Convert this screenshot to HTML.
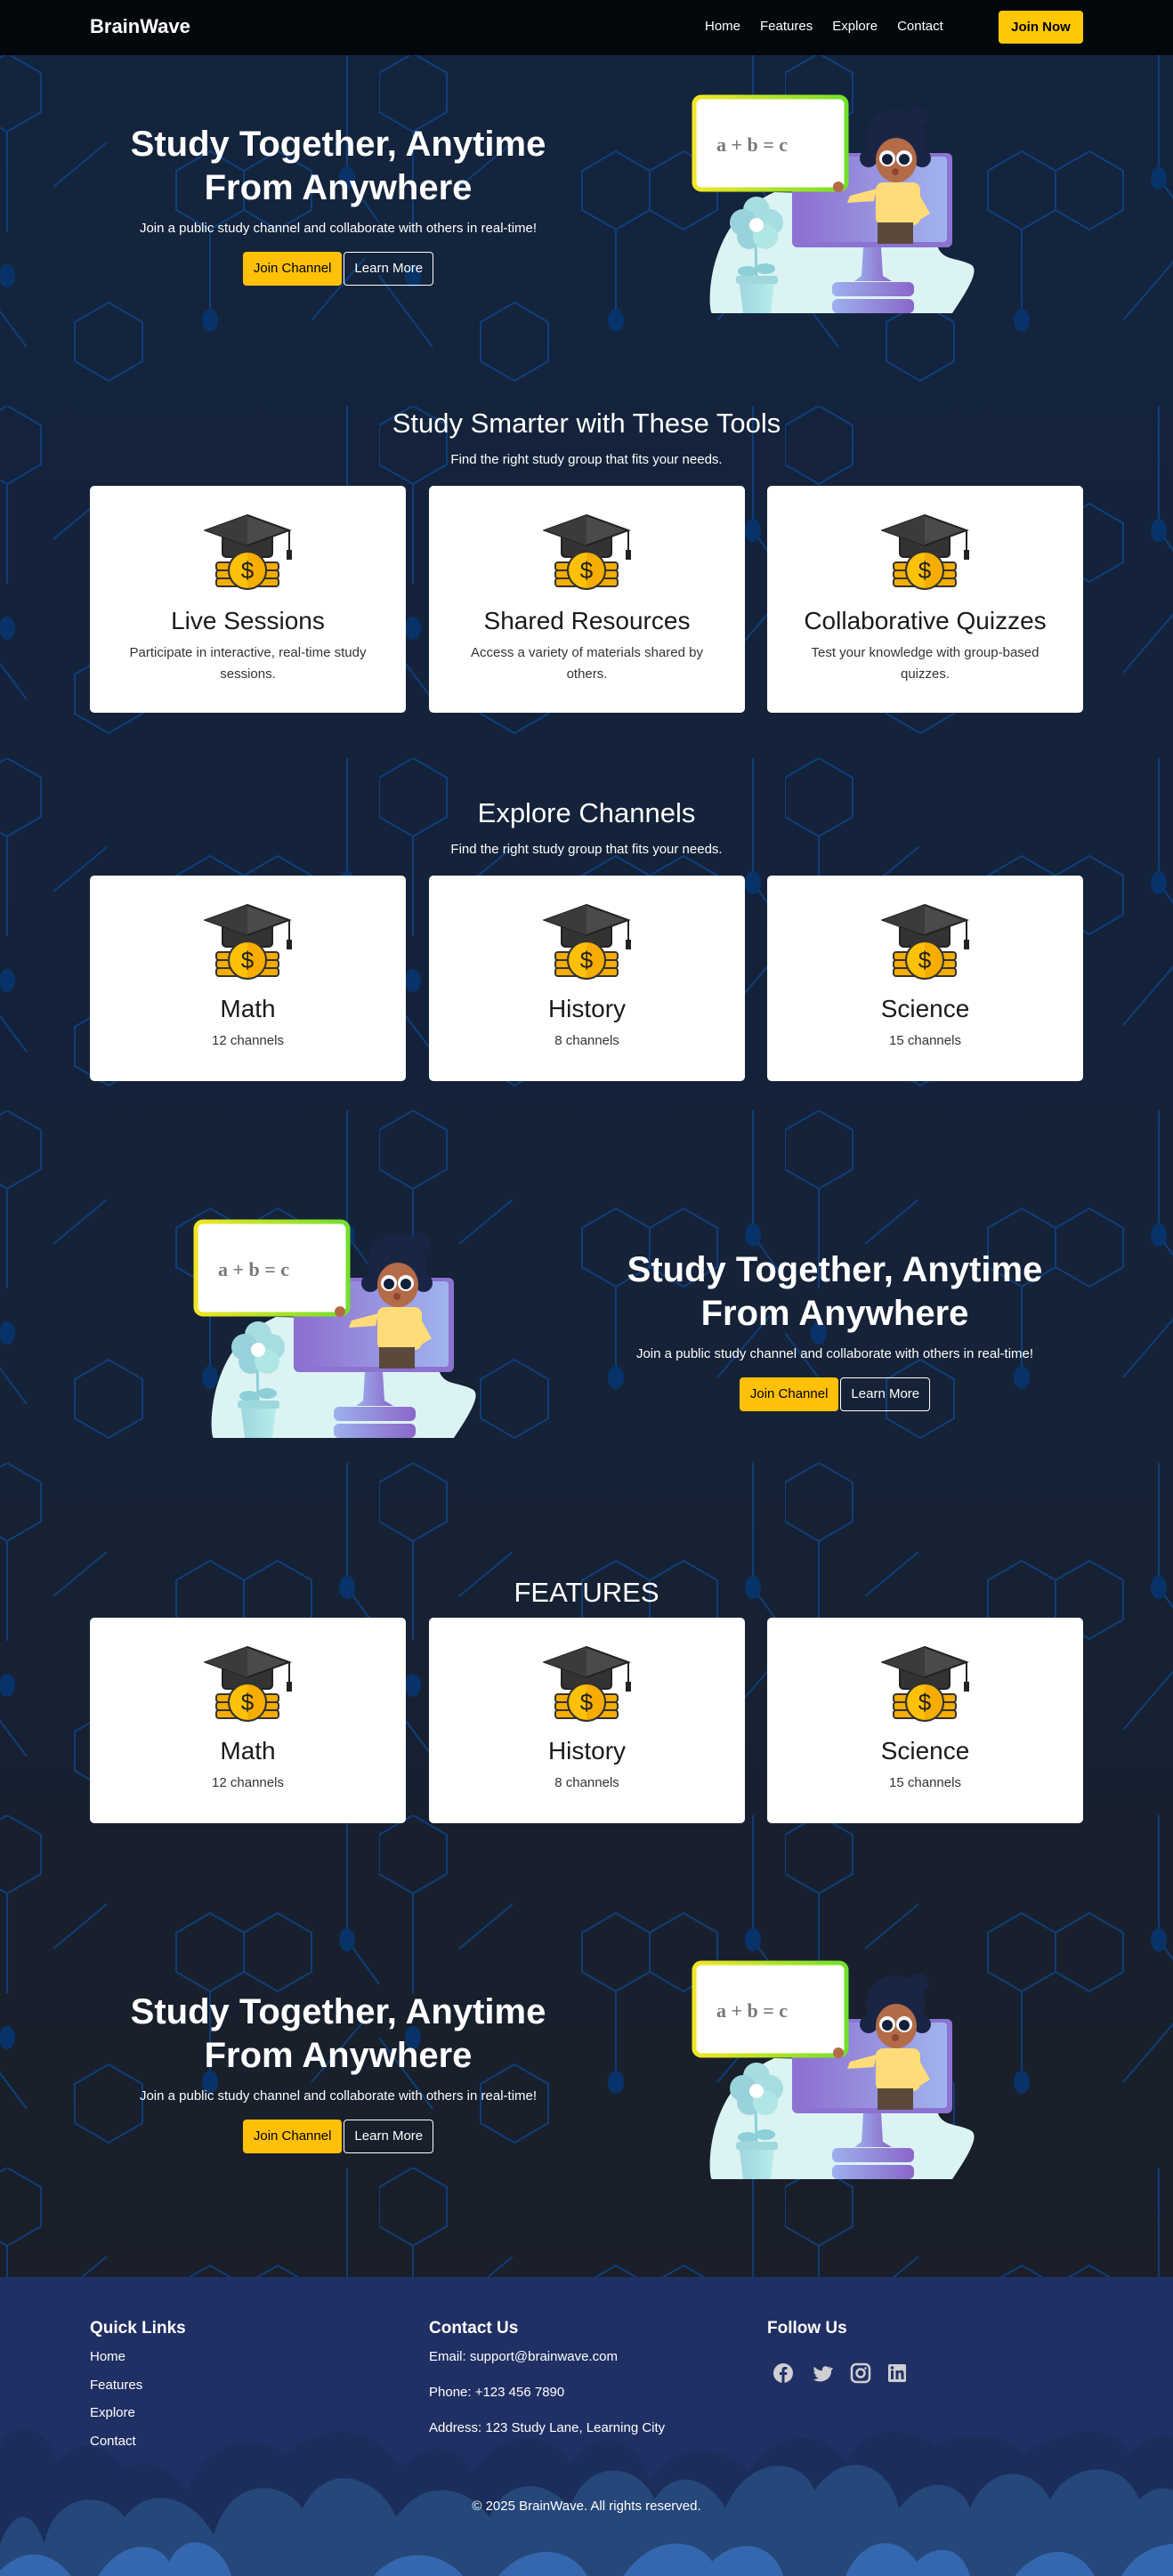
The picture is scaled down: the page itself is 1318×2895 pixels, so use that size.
<!DOCTYPE html>
<html><head><meta charset="utf-8">
<style>
*{box-sizing:border-box;margin:0;padding:0}
body{width:1318px;height:2895px;overflow:hidden;font-family:"Liberation Sans",sans-serif;color:#fff;position:relative;background:linear-gradient(#13243d 0%,#152238 50%,#1b1e24 100%)}
#bg{position:absolute;left:0;top:0;width:1318px;height:2560px}
nav{position:absolute;left:0;top:0;width:1318px;height:62px;background:#03080d;z-index:2}
.logo{position:absolute;left:101px;top:17px;font-size:22px;font-weight:bold}
.links{position:absolute;left:792px;top:21px;font-size:15px}
.links span{margin-right:22px}
.jn{position:absolute;left:1122px;top:12px;width:95px;height:37px;background:#ffc807;color:#000;border-radius:4px;font-size:15px;font-weight:bold;text-align:center;line-height:37px}
.abs{position:absolute}
.hero{position:absolute;width:560px;text-align:center}
.hero h1{font-size:40px;line-height:49px;font-weight:bold}
.hero p{font-size:15px;margin-top:12px}
.btns{margin-top:18px}
.b{display:inline-block;height:38px;line-height:36px;padding:0 11px;font-size:15px;border-radius:4px;vertical-align:top}
.y{background:#ffc107;color:#000;border:1px solid #ffc107}
.o{border:1px solid #fff;color:#fff;margin-left:2px}
.sec{position:absolute;left:0;width:1318px;text-align:center}
.sec h2{font-size:31px;font-weight:normal}
.sec p{font-size:15px;margin-top:14px}
.card{position:absolute;width:355px;background:#fff;border-radius:5px;text-align:center;color:#222}
.card svg{display:block;margin:0 auto}
.card h3{font-size:28px;font-weight:normal;margin-top:16px;color:#1a1a1a}
.card .d{font-size:15px;line-height:24px;color:#333;margin:8px 30px 0}
footer{position:absolute;left:0;top:2559px;width:1318px;height:336px;background:#203064;overflow:hidden}
footer h4{position:absolute;font-size:19px;font-weight:bold;top:47px}
footer .l{position:absolute;font-size:15px}
</style></head><body>
<svg id="bg" viewBox="0 0 1318 2560">
<defs>
<pattern id="hx" width="456" height="396" patternUnits="userSpaceOnUse" x="-30" y="60">
<g fill="none" stroke="#0b4a98" stroke-width="2" opacity=".7">
<path d="M38 0 L76 22 L76 66 L38 88 L0 66 L0 22 Z"/>
<path d="M266 110 L304 132 L304 176 L266 198 L228 176 L228 132 Z"/>
<path d="M342 110 L380 132 L380 176 L342 198 L304 176 L304 132 Z"/>
<path d="M152 280 L190 302 L190 346 L152 368 L114 346 L114 302 Z"/>
<path d="M38 88 L38 200 M266 198 L266 300 M420 0 L420 140 L456 190"/>
<path d="M0 250 L60 330 M380 300 L440 230 M90 150 L150 100"/>
</g>
<g fill="#08336a">
<ellipse cx="38" cy="250" rx="9" ry="13"/>
<ellipse cx="266" cy="300" rx="9" ry="13"/>
<ellipse cx="420" cy="140" rx="9" ry="13"/>
</g>
</pattern>
</defs>
<rect width="1318" height="2560" fill="url(#hx)"/>
</svg>

<svg width="0" height="0" style="position:absolute">
<defs>
<linearGradient id="bd" x1="0" x2="1"><stop offset="0" stop-color="#f2e624"/><stop offset="1" stop-color="#72e02a"/></linearGradient>
<linearGradient id="mon" x1="0" x2="1"><stop offset="0" stop-color="#8e6fd0"/><stop offset="1" stop-color="#a0b4ee"/></linearGradient>
<linearGradient id="st" x1="0" x2="1"><stop offset="0" stop-color="#9db0ee"/><stop offset="1" stop-color="#8a67c9"/></linearGradient>
<linearGradient id="pt" x1="0" x2="1"><stop offset="0" stop-color="#9fd6de"/><stop offset="1" stop-color="#b6ecea"/></linearGradient>
<symbol id="ill" viewBox="0 0 340 260">
<path d="M100 116 C70 130 45 150 32 200 C25 230 28 252 30 252 L300 252 C318 225 330 205 322 198 C305 188 285 195 282 170 L282 120 Z" fill="#dcf3f3"/>
<rect x="120" y="72" width="180" height="106" rx="6" fill="#8c72d1"/>
<rect x="126" y="76" width="168" height="96" rx="4" fill="url(#mon)"/>
<path d="M200 178 L220 178 L222 210 L232 216 L190 216 L198 210 Z" fill="url(#st)"/>
<rect x="165" y="217" width="92" height="16" rx="6" fill="url(#st)"/>
<rect x="165" y="236" width="92" height="16" rx="6" fill="url(#st)"/>
<circle cx="236" cy="56" r="33" fill="#1a2545"/>
<circle cx="206" cy="78" r="10" fill="#1a2545"/><circle cx="266" cy="78" r="10" fill="#1a2545"/>
<circle cx="262" cy="32" r="11" fill="#1a2545"/>
<rect x="214" y="105" width="50" height="48" rx="8" fill="#ffdc78"/>
<path d="M215 112 L185 120 L182 128 L212 126 Z" fill="#ffdc78"/>
<path d="M258 110 L275 140 L262 148 L250 120 Z" fill="#ffdc78"/>
<rect x="216" y="150" width="40" height="24" fill="#5b4a3b"/>
<ellipse cx="237" cy="80" rx="23" ry="25" fill="#b36b48"/>
<circle cx="227" cy="78" r="9" fill="#fff"/><circle cx="246" cy="78" r="9" fill="#fff"/>
<circle cx="227" cy="79" r="6" fill="#13203a"/><circle cx="246" cy="79" r="6" fill="#13203a"/>
<circle cx="236" cy="93" r="4" fill="#8c4730"/>
<rect x="10" y="9" width="171" height="104" rx="8" fill="#fff" stroke="url(#bd)" stroke-width="5"/>
<text x="35" y="70" font-family="Liberation Serif,serif" font-weight="bold" font-size="22" fill="#7a7a7a">a + b = c</text>
<circle cx="172" cy="110" r="6" fill="#b36b48"/>
<path d="M79 168 L80 215" stroke="#8ccfd7" stroke-width="3"/>
<ellipse cx="70" cy="205" rx="11" ry="6" fill="#8ccfd7"/><ellipse cx="90" cy="202" rx="11" ry="6" fill="#8ccfd7"/>
<circle cx="80" cy="136" r="15" fill="#a5dde0"/><circle cx="65" cy="150" r="15" fill="#9ad2db"/><circle cx="95" cy="150" r="15" fill="#a5dde0"/><circle cx="72" cy="166" r="14" fill="#9ad2db"/><circle cx="90" cy="166" r="14" fill="#b0e6e4"/>
<circle cx="80" cy="153" r="8" fill="#fff"/>
<rect x="57" y="210" width="47" height="9" rx="3" fill="#9fd8dc"/>
<path d="M61 219 L100 219 L96 252 L65 252 Z" fill="url(#pt)"/>
</symbol>
<symbol id="cap" viewBox="0 0 100 88">
<rect x="21" y="18" width="56" height="30" rx="4" fill="#333" stroke="#222" stroke-width="2"/>
<path d="M49 1 L96 18 L49 35 L2 18 Z" fill="#4a4a4a" stroke="#222" stroke-width="2"/>
<path d="M49 1 L49 35 L2 18 Z" fill="#3b3b3b"/>
<path d="M96 18 L96 42" stroke="#222" stroke-width="2"/>
<rect x="93" y="40" width="6" height="11" fill="#222"/>
<g fill="#f6ad00" stroke="#333" stroke-width="2">
<rect x="14" y="54" width="28" height="9" rx="3"/><rect x="14" y="63" width="28" height="9" rx="3"/><rect x="14" y="72" width="28" height="9" rx="3"/>
<rect x="56" y="54" width="28" height="9" rx="3"/><rect x="56" y="63" width="28" height="9" rx="3"/><rect x="56" y="72" width="28" height="9" rx="3"/>
</g>
<circle cx="49" cy="63" r="21" fill="#ffc107" stroke="#333" stroke-width="2"/>
<path d="M49 42 A21 21 0 0 1 49 84 Z" fill="#f6ad00"/>
<circle cx="49" cy="63" r="21" fill="none" stroke="#333" stroke-width="2"/>
<text x="49" y="72" text-anchor="middle" font-family="Liberation Sans,sans-serif" font-size="26" fill="#222">$</text>
</symbol>
</defs></svg>

<nav><div class="logo">BrainWave</div>
<div class="links"><span>Home</span><span>Features</span><span>Explore</span><span>Contact</span></div>
<div class="jn">Join Now</div></nav>

<div class="hero" style="left:100px;top:138px"><h1>Study Together, Anytime<br>From Anywhere</h1><p>Join a public study channel and collaborate with others in real-time!</p><div class="btns"><span class="b y">Join Channel</span><span class="b o">Learn More</span></div></div>
<svg class="abs" style="left:770px;top:100px" width="340" height="260"><use href="#ill"/></svg>

<div class="sec" style="top:458px"><h2>Study Smarter with These Tools</h2><p>Find the right study group that fits your needs.</p></div>
<div class="card" style="left:101px;top:546px;height:255px"><svg width="100" height="88" style="margin-top:32px!important"><use href="#cap"/></svg><h3>Live Sessions</h3><div class="d">Participate in interactive, real-time study sessions.</div></div>
<div class="card" style="left:482px;top:546px;height:255px"><svg width="100" height="88" style="margin-top:32px!important"><use href="#cap"/></svg><h3>Shared Resources</h3><div class="d">Access a variety of materials shared by others.</div></div>
<div class="card" style="left:862px;top:546px;height:255px"><svg width="100" height="88" style="margin-top:32px!important"><use href="#cap"/></svg><h3>Collaborative Quizzes</h3><div class="d">Test your knowledge with group-based quizzes.</div></div>

<div class="sec" style="top:896px"><h2>Explore Channels</h2><p>Find the right study group that fits your needs.</p></div>
<div class="card" style="left:101px;top:984px;height:231px"><svg width="100" height="88" style="margin-top:32px!important"><use href="#cap"/></svg><h3 style="margin-top:14px">Math</h3><div class="d">12 channels</div></div>
<div class="card" style="left:482px;top:984px;height:231px"><svg width="100" height="88" style="margin-top:32px!important"><use href="#cap"/></svg><h3 style="margin-top:14px">History</h3><div class="d">8 channels</div></div>
<div class="card" style="left:862px;top:984px;height:231px"><svg width="100" height="88" style="margin-top:32px!important"><use href="#cap"/></svg><h3 style="margin-top:14px">Science</h3><div class="d">15 channels</div></div>

<svg class="abs" style="left:210px;top:1364px" width="340" height="260"><use href="#ill"/></svg>
<div class="hero" style="left:658px;top:1403px"><h1>Study Together, Anytime<br>From Anywhere</h1><p>Join a public study channel and collaborate with others in real-time!</p><div class="btns"><span class="b y">Join Channel</span><span class="b o">Learn More</span></div></div>

<div class="sec" style="top:1772px"><h2>FEATURES</h2></div>
<div class="card" style="left:101px;top:1818px;height:231px"><svg width="100" height="88" style="margin-top:32px!important"><use href="#cap"/></svg><h3 style="margin-top:14px">Math</h3><div class="d">12 channels</div></div>
<div class="card" style="left:482px;top:1818px;height:231px"><svg width="100" height="88" style="margin-top:32px!important"><use href="#cap"/></svg><h3 style="margin-top:14px">History</h3><div class="d">8 channels</div></div>
<div class="card" style="left:862px;top:1818px;height:231px"><svg width="100" height="88" style="margin-top:32px!important"><use href="#cap"/></svg><h3 style="margin-top:14px">Science</h3><div class="d">15 channels</div></div>

<div class="hero" style="left:100px;top:2237px"><h1>Study Together, Anytime<br>From Anywhere</h1><p>Join a public study channel and collaborate with others in real-time!</p><div class="btns"><span class="b y">Join Channel</span><span class="b o">Learn More</span></div></div>
<svg class="abs" style="left:770px;top:2197px" width="340" height="260"><use href="#ill"/></svg>

<footer>
<svg class="abs" style="left:0;top:0" width="1318" height="336" viewBox="0 0 1318 336">
<path d="M0 336 L0 190 C20 150 60 180 65 210 C90 170 130 200 140 215 C170 200 200 220 210 240 C240 170 300 180 320 200 C380 150 430 180 450 215 C480 180 520 190 530 220 C560 170 620 170 640 210 C680 160 720 190 730 230 C760 180 820 190 840 220 C870 170 930 170 950 210 C980 150 1040 180 1050 190 C1090 170 1140 180 1150 200 C1190 170 1250 160 1270 200 C1290 170 1318 180 1318 180 L1318 336 Z" fill="#1b2d5b"/>
<path d="M0 336 L0 300 C20 250 40 270 50 300 C60 240 120 240 140 270 C170 230 220 250 240 290 C260 220 320 230 340 260 C370 200 430 230 445 270 C480 220 530 240 550 270 C570 220 620 230 640 260 C660 200 720 210 735 250 C760 210 800 230 815 260 C840 200 900 200 915 240 C950 190 1000 210 1010 260 C1040 220 1080 230 1090 260 C1110 210 1160 210 1180 250 C1200 210 1260 200 1280 250 C1300 230 1318 240 1318 240 L1318 336 Z" fill="#254779"/>
<path d="M0 336 L0 330 C30 300 60 310 80 336 Z M110 336 C140 290 180 300 190 320 C210 280 250 300 260 336 Z M420 336 C450 300 500 310 520 336 Z M560 336 C590 300 640 300 660 336 Z M700 336 C740 280 790 300 800 320 C830 290 870 300 880 336 Z M950 336 C970 290 1010 290 1030 320 C1050 300 1080 300 1090 336 Z M1140 336 C1170 300 1210 300 1230 336 Z M1260 336 C1280 300 1318 300 1318 300 L1318 336 Z" fill="#3567ae"/>
</svg>
<h4 style="left:101px">Quick Links</h4>
<div class="l" style="left:101px;top:81px">Home</div>
<div class="l" style="left:101px;top:113px">Features</div>
<div class="l" style="left:101px;top:144px">Explore</div>
<div class="l" style="left:101px;top:176px">Contact</div>
<h4 style="left:482px">Contact Us</h4>
<div class="l" style="left:482px;top:81px">Email: support@brainwave.com</div>
<div class="l" style="left:482px;top:121px">Phone: +123 456 7890</div>
<div class="l" style="left:482px;top:161px">Address: 123 Study Lane, Learning City</div>
<h4 style="left:862px">Follow Us</h4>
<svg class="abs" style="left:868px;top:96px" width="160" height="24" viewBox="0 0 160 24" fill="#cfcfd4">
<circle cx="12" cy="12" r="11"/><path d="M13.5 23 L13.5 14 L16 14 L16.4 11 L13.5 11 L13.5 9.3 C13.5 8.4 13.8 7.8 15 7.8 L16.5 7.8 L16.5 5.2 C16 5.1 15 5 14 5 C11.8 5 10.5 6.3 10.5 8.8 L10.5 11 L8 11 L8 14 L10.5 14 L10.5 23 Z" fill="#203064"/>
<path d="M57 5 C56 5.5 55.2 5.7 54.3 5.8 C55.2 5.2 55.8 4.4 56.2 3.4 C55.3 3.9 54.4 4.3 53.4 4.5 C51.6 2.6 48.5 3 47.3 5.3 C46.8 6.2 46.7 7.3 47 8.3 C43.4 8.1 40.2 6.4 38 3.7 C36.8 5.7 37.4 8.3 39.3 9.6 C38.6 9.6 38 9.4 37.4 9.1 C37.4 11.1 38.8 12.9 40.8 13.3 C40.2 13.5 39.5 13.5 38.9 13.4 C39.4 15.1 41 16.3 42.8 16.3 C41.1 17.6 38.9 18.3 36.7 18.1 C46 24 57.7 18 57 8 C57.9 7.3 58.5 6.4 59 5.4 Z" transform="translate(9,1)"/>
<rect x="89" y="2" width="20" height="20" rx="5" fill="none" stroke="#cfcfd4" stroke-width="2.5"/><circle cx="99" cy="12" r="4.5" fill="none" stroke="#cfcfd4" stroke-width="2.5"/><circle cx="104.5" cy="6.5" r="1.3"/>
<rect x="130" y="2" width="20" height="20" rx="2"/><rect x="133" y="9" width="3" height="10" fill="#203064"/><circle cx="134.5" cy="6" r="1.8" fill="#203064"/><path d="M138.5 9 L141.5 9 L141.5 10.5 C142.3 9.2 143.5 8.8 144.7 8.8 C146.8 8.8 147.5 10.2 147.5 12.5 L147.5 19 L144.5 19 L144.5 13.2 C144.5 12 144 11.4 143 11.4 C142 11.4 141.5 12.2 141.5 13.3 L141.5 19 L138.5 19 Z" fill="#203064"/>
</svg>
<div class="l" style="left:0;width:1318px;text-align:center;top:249px">© 2025 BrainWave. All rights reserved.</div>
</footer>
</body></html>
